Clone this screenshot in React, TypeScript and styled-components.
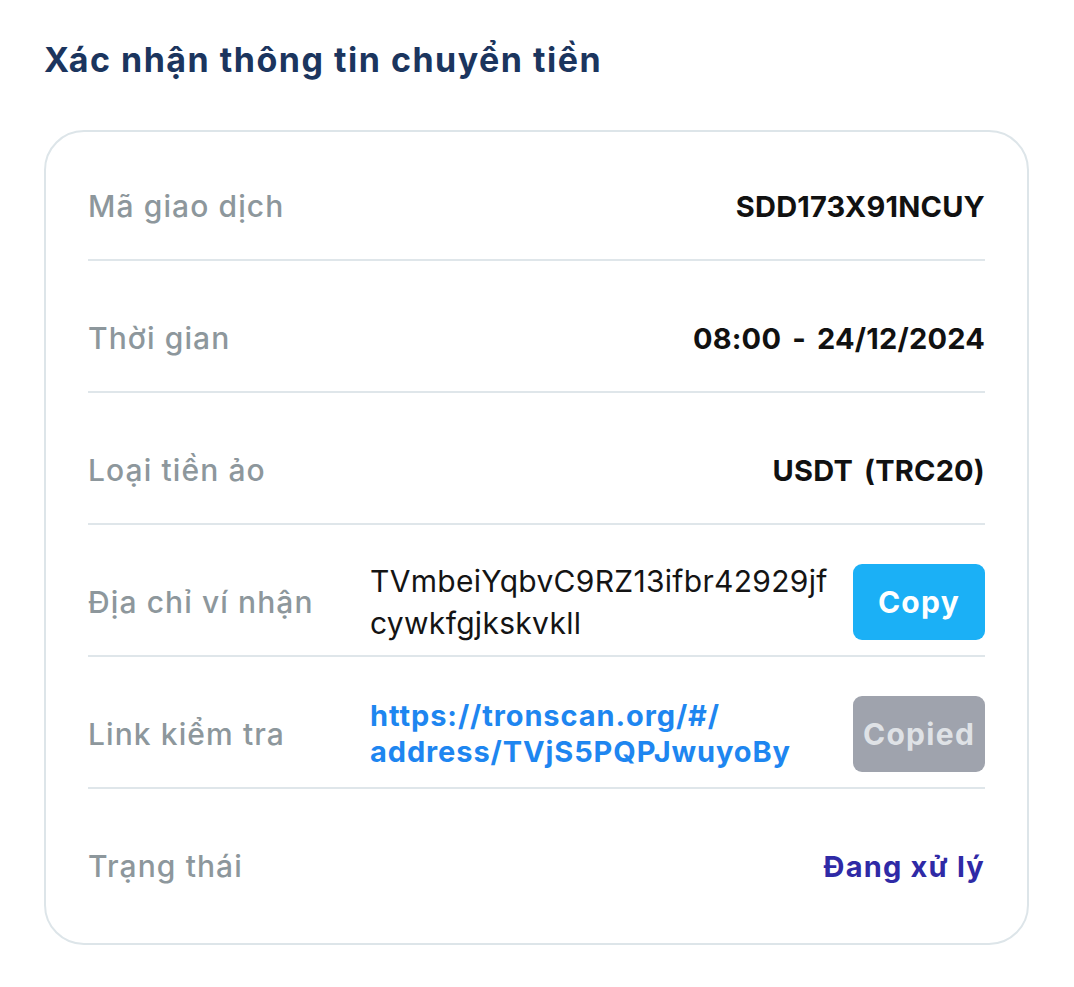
import React from "react";
import styled, { createGlobalStyle } from "styled-components";

interface Row {
  label: string;
  value: React.ReactNode;
}

const GlobalStyle = createGlobalStyle`
  body {
    margin: 0;
    background: #ffffff;
    font-family: "Inter", "Noto Sans", sans-serif;
  }
`;

const addressLines = ["TVmbeiYqbvC9RZ13ifbr42929jf", "cywkfgjkskvkll"];
const linkLines = ["https://tronscan.org/#/", "address/TVjS5PQPJwuyoBy"];

const App = () => {
  const simpleRows: Row[] = [
    { label: "Mã giao dịch", value: "SDD173X91NCUY" },
    { label: "Thời gian", value: "08:00 - 24/12/2024" },
    { label: "Loại tiền ảo", value: "USDT (TRC20)" },
  ];

  return (
    <>
      <GlobalStyle />
      <Page>
        <Title>Xác nhận thông tin chuyển tiền</Title>
        <Card>
          {simpleRows.map((row) => (
            <InfoRow key={row.label}>
              <Label>{row.label}</Label>
              <Value>{row.value}</Value>
            </InfoRow>
          ))}
          <InfoRow>
            <Label>Địa chỉ ví nhận</Label>
            <Address>
              {addressLines.map((line) => (
                <span key={line}>{line}</span>
              ))}
            </Address>
            <ActionButton $done={false}>Copy</ActionButton>
          </InfoRow>
          <InfoRow>
            <Label>Link kiểm tra</Label>
            <LinkText href="#">
              {linkLines.map((line) => (
                <span key={line}>{line}</span>
              ))}
            </LinkText>
            <ActionButton $done>Copied</ActionButton>
          </InfoRow>
          <InfoRow>
            <Label>Trạng thái</Label>
            <Status>Đang xử lý</Status>
          </InfoRow>
        </Card>
      </Page>
    </>
  );
};

export default App;

const Page = styled.div`
  padding: 36px 45px 44px 44px;
`;

const Title = styled.h1`
  margin: 0 0 46px;
  font-size: 34px;
  line-height: 48px;
  font-weight: 700;
  letter-spacing: 1.5px;
  color: #1b355e;
`;

const Card = styled.div`
  border: 2px solid #dde5e9;
  border-radius: 40px;
  padding: 0 42px;
`;

const InfoRow = styled.div`
  display: grid;
  grid-template-columns: 258px 1fr auto;
  grid-template-rows: 74px;
  column-gap: 24px;
  align-items: center;
  padding: 40px 0 16px;
  border-bottom: 2px solid #dfe6ea;

  &:first-child {
    padding-top: 37px;
  }

  &:last-child {
    border-bottom: none;
    padding-bottom: 40px;
  }
`;

const Label = styled.div`
  font-size: 30px;
  font-weight: 500;
  letter-spacing: 1.1px;
  color: #8d979c;
`;

const Value = styled.div`
  grid-column: 2 / 4;
  justify-self: end;
  font-size: 29px;
  font-weight: 700;
  letter-spacing: 0.2px;
  word-spacing: 4px;
  color: #111111;
`;

const Status = styled(Value)`
  letter-spacing: 1.2px;
  word-spacing: 0;
  color: #2f2aa6;
`;

const Address = styled.div`
  display: flex;
  flex-direction: column;
  font-size: 30px;
  line-height: 42px;
  letter-spacing: 0.3px;
  color: #141414;
`;

const LinkText = styled.a`
  display: flex;
  flex-direction: column;
  font-size: 29px;
  line-height: 36px;
  font-weight: 700;
  letter-spacing: 0.9px;
  color: #1e86f0;
  text-decoration: none;
`;

const ActionButton = styled.button<{ $done: boolean }>`
  justify-self: end;
  width: 132px;
  height: 76px;
  border: none;
  border-radius: 9px;
  font-family: inherit;
  font-size: 30px;
  font-weight: 700;
  letter-spacing: 1.3px;
  background: ${({ $done }) => ($done ? "#9fa3ad" : "#1bb0f6")};
  color: ${({ $done }) => ($done ? "#dfe2e6" : "#ffffff")};
`;
